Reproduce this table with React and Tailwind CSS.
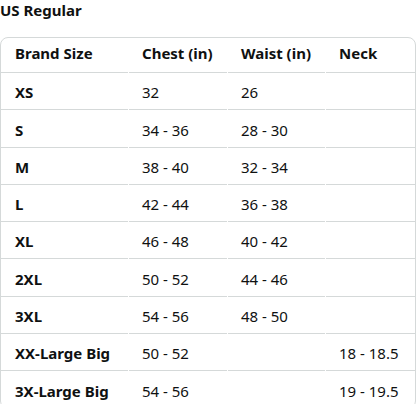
import React from "react";

const rows = [
  ["XS", "32", "26", ""],
  ["S", "34 - 36", "28 - 30", ""],
  ["M", "38 - 40", "32 - 34", ""],
  ["L", "42 - 44", "36 - 38", ""],
  ["XL", "46 - 48", "40 - 42", ""],
  ["2XL", "50 - 52", "44 - 46", ""],
  ["3XL", "54 - 56", "48 - 50", ""],
  ["XX-Large Big", "50 - 52", "", "18 - 18.5"],
  ["3X-Large Big", "54 - 56", "", "19 - 19.5"],
];

const cols = "grid grid-cols-[127px_98px_97px_1fr] gap-x-px";

function Row({ cells, last }) {
  return (
    <div className={cols}>
      {cells.map((c, i) => (
        <div
          key={i}
          className={`flex items-center whitespace-nowrap h-[37.25px] pt-[3px] text-[15px] ${i === 0 ? "pl-[14px] font-bold" : "pl-[13px]"} ${last ? "" : "border-b border-[#d5d9d9]"}`}
        >
          {c}
        </div>
      ))}
    </div>
  );
}

export default function App() {
  return (
    <div className="w-[417px] h-[404px] overflow-hidden bg-white text-[#0f1111]" style={{ fontFamily: '"Noto Sans", sans-serif' }}>
      <div className="text-[15px] font-bold leading-[20px]">US Regular</div>
      <div className="mt-[17px] w-[416px] border border-[#d5d9d9] rounded-lg">
        <div className={`h-[35px] ${cols}`}>
          {["Brand Size", "Chest (in)", "Waist (in)", "Neck"].map((c, i) => (
            <div key={i} className={`flex items-center whitespace-nowrap pb-[4px] text-[15px] font-bold border-b border-[#d5d9d9] ${i === 0 ? "pl-[14px]" : "pl-[13px]"}`}>{c}</div>
          ))}
        </div>
        {rows.map((r, i) => (
          <Row key={i} cells={r} last={i === rows.length - 1} />
        ))}
      </div>
    </div>
  );
}
